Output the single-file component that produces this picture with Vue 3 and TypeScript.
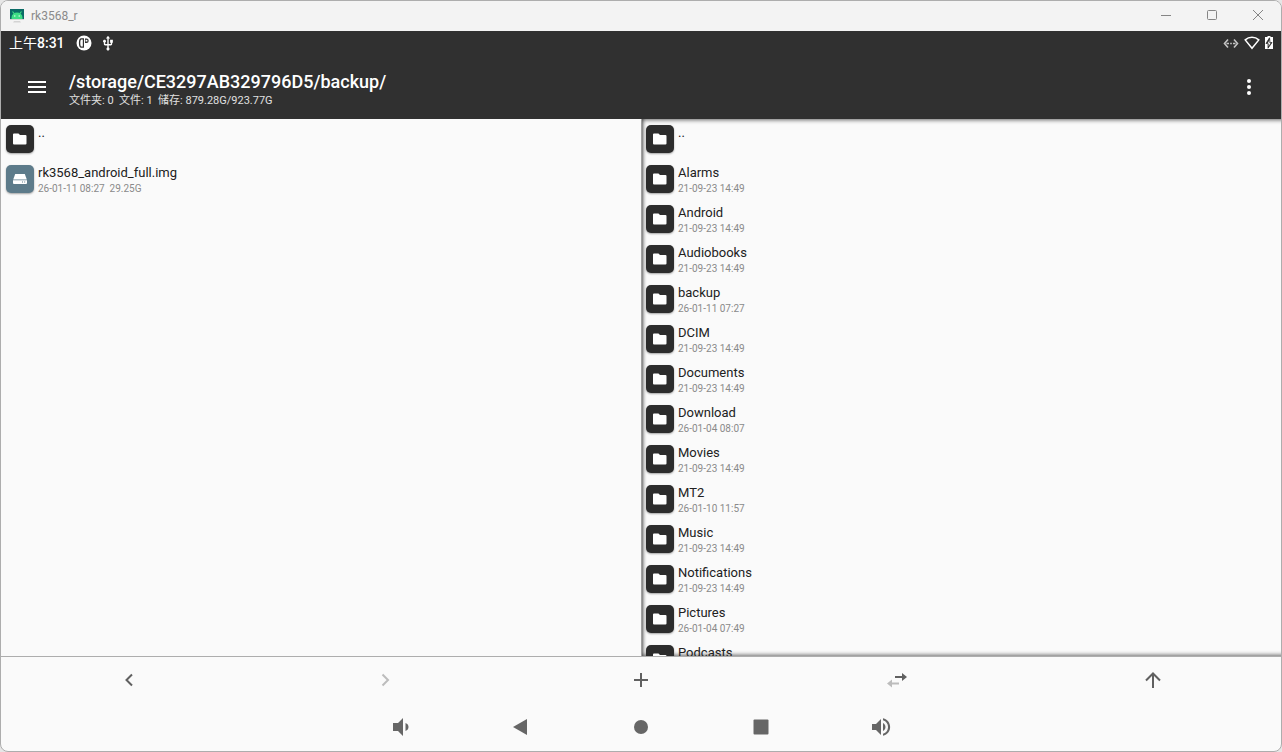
<script setup lang="ts">
interface Entry {
  name: string
  meta?: string
  kind?: 'folder' | 'disk'
}

const left: Entry[] = [
  { name: '..' },
  { name: 'rk3568_android_full.img', meta: '26-01-11 08:27\u00a0 29.25G', kind: 'disk' },
]

const right: Entry[] = [
  { name: '..' },
  { name: 'Alarms', meta: '21-09-23 14:49' },
  { name: 'Android', meta: '21-09-23 14:49' },
  { name: 'Audiobooks', meta: '21-09-23 14:49' },
  { name: 'backup', meta: '26-01-11 07:27' },
  { name: 'DCIM', meta: '21-09-23 14:49' },
  { name: 'Documents', meta: '21-09-23 14:49' },
  { name: 'Download', meta: '26-01-04 08:07' },
  { name: 'Movies', meta: '21-09-23 14:49' },
  { name: 'MT2', meta: '26-01-10 11:57' },
  { name: 'Music', meta: '21-09-23 14:49' },
  { name: 'Notifications', meta: '21-09-23 14:49' },
  { name: 'Pictures', meta: '26-01-04 07:49' },
  { name: 'Podcasts' },
]

const panes = [
  { id: 'left', entries: left },
  { id: 'right', entries: right },
]
</script>

<template>
  <div class="window">
    <div class="titlebar">
      <svg class="app-icon" viewBox="0 0 14 14" aria-hidden="true">
        <rect x="0" y="0" width="14" height="11" fill="#0a6b66" />
        <path d="M1.500 10V8.500a5.500 5 0 0 1 11 0V10z" fill="#3ddc84" />
        <path d="M2.500 2.500l2 2.500M11.500 2.500L9.500 5" stroke="#3ddc84" stroke-width="1.200" />
        <circle cx="4.800" cy="7" r=".7" fill="#eafff3" /><circle cx="9.200" cy="7" r=".7" fill="#eafff3" />
        <path d="M0 10h14v1H0zM4 12h6l1 1.500H3z" fill="#d3d3d3" />
      </svg>
      <span class="app-name">rk3568_r</span>
      <div class="controls">
        <button type="button" aria-label="Minimize"><svg viewBox="0 0 12 12"><path d="M1 5.500h10" /></svg></button>
        <button type="button" aria-label="Maximize"><svg viewBox="0 0 12 12"><rect x="1.500" y=".5" width="9" height="9" rx="1" /></svg></button>
        <button type="button" aria-label="Close"><svg viewBox="0 0 12 12"><path d="M1 0l10 10M11 0L1 10" /></svg></button>
      </div>
    </div>

    <div class="status">
      <span class="clock"><span class="period">上午</span>8:31</span>
      <svg class="s16" viewBox="0 0 16 16" aria-hidden="true">
        <circle cx="8" cy="8" r="7.500" fill="#fff" />
        <path d="M5.200 3.200H8v9.600H5.200C3.600 12.800 2.900 11 2.900 8s.7-4.800 2.300-4.800z" fill="#303030" />
        <path d="M5.400 4.500h1.400v7H5.400C4.600 11.500 4.300 10 4.300 8s.3-3.500 1.100-3.500z" fill="#fff" />
        <path d="M9 3.500h1.500a2.200 2.200 0 0 1 0 4.400H9z" fill="#303030" />
        <rect x="9.600" y="4.800" width="1.800" height="1.700" fill="#fff" />
      </svg>
      <svg class="s16 usb" viewBox="2 0 20 23" aria-hidden="true">
        <path fill="#fff" d="M15 7v4h1v2h-3V5h2l-3-4-3 4h2v8H8v-2.070c.700-.370 1.200-1.080 1.200-1.930 0-1.210-.990-2.200-2.200-2.200S4.800 7.790 4.800 9c0 .850.500 1.560 1.200 1.930V13c0 1.110.890 2 2 2h3v3.050c-.710.370-1.200 1.100-1.200 1.950 0 1.220.990 2.200 2.200 2.200s2.200-.980 2.200-2.200c0-.850-.490-1.580-1.200-1.950V15h3c1.110 0 2-.890 2-2v-2h1V7h-4z" />
      </svg>
      <div class="indicators">
        <svg class="ethernet" viewBox="0 0 16 16" aria-hidden="true">
          <path d="M5 4.500L1.500 8.500l3.500 4M11 4.500l3.500 4-3.500 4" fill="none" stroke="#c4c4c4" stroke-width="1.600" />
          <path d="M3.500 8.500h2.500M7.200 8.500h1.600M10 8.500h2.500" stroke="#c4c4c4" stroke-width="1.500" />
        </svg>
        <svg class="wifi" viewBox="0 0 16 16" aria-hidden="true">
          <path d="M1.200 4.900C5 1.400 11 1.400 14.800 4.900L8 13.200z" fill="none" stroke="#fff" stroke-width="1.500" />
        </svg>
        <svg class="battery" viewBox="0 0 8 14" aria-hidden="true">
          <path d="M2.500 0h3v1H8v12H0V1h2.500z" fill="#fff" />
          <path d="M4.500 1.800L1 7.500h2L3 12.200 7 6.500H5z" fill="#303030" stroke="#303030" stroke-width=".8" />
          <path d="M4.600 4L2.600 7.400h1.200L3.500 10.200l2.200-3.500H4.300z" fill="#fff" />
        </svg>
      </div>
    </div>

    <header class="appbar">
      <button type="button" class="menu" aria-label="Menu">
        <svg viewBox="0 0 24 24"><path fill="#fff" d="M3 18h18v-2H3v2zm0-5h18v-2H3v2zm0-7v2h18V6H3z" /></svg>
      </button>
      <div class="heading">
        <h1>/storage/CE3297AB329796D5/backup/</h1>
        <p>文件夹: 0&nbsp; 文件: 1&nbsp; 储存: 879.28G/923.77G</p>
      </div>
      <button type="button" class="more" aria-label="More options">
        <svg viewBox="0 0 24 24"><g fill="#fff"><circle cx="12" cy="6" r="2" /><circle cx="12" cy="12" r="2" /><circle cx="12" cy="18" r="2" /></g></svg>
      </button>
    </header>

    <main class="panes">
      <ul v-for="pane in panes" :key="pane.id" class="pane" :class="pane.id">
        <li v-for="entry in pane.entries" :key="entry.name" class="row">
          <span class="tile" :class="{ disk: entry.kind === 'disk' }">
            <svg v-if="entry.kind === 'disk'" viewBox="0 0 16 16" aria-hidden="true">
              <path d="M3.200 3h9.600l2 5.500H1.200z" fill="#fff" />
              <path d="M1 9.300h14V12a1 1 0 0 1-1 1H2a1 1 0 0 1-1-1z" fill="#fff" />
              <path d="M10 11h1M12.200 11h1" stroke="#5d7b8a" stroke-width="1" />
            </svg>
            <svg v-else viewBox="0 0 16 16" aria-hidden="true">
              <path d="M2 2.500h4.500L8 4h5.500a1 1 0 0 1 1 1v7.500a1 1 0 0 1-1 1H2a1 1 0 0 1-1-1v-9a1 1 0 0 1 1-1z" fill="#fff" />
            </svg>
          </span>
          <span class="text">
            <span class="name">{{ entry.name }}</span>
            <span v-if="entry.meta" class="meta">{{ entry.meta }}</span>
          </span>
        </li>
      </ul>
    </main>

    <div class="toolbar">
      <button type="button" aria-label="Back"><svg viewBox="0 0 20 20"><path d="M13 4.500L7.500 10l5.500 5.500" /></svg></button>
      <button type="button" aria-label="Forward" disabled><svg viewBox="0 0 20 20"><path d="M7.500 4.500L13 10l-5.500 5.500" /></svg></button>
      <button type="button" aria-label="New"><svg viewBox="0 0 20 20"><path d="M10 3v14M3 10h14" /></svg></button>
      <button type="button" aria-label="Sync panes">
        <svg viewBox="0 0 20 20">
          <path d="M8 7h8" /><path class="solid" d="M15 3l5 4-5 4z" />
          <g class="faint"><path d="M4 13.500h8" /><path class="solid" d="M5 9.500L0 13.500l5 4z" /></g>
        </svg>
      </button>
      <button type="button" aria-label="Up"><svg viewBox="0 0 20 20"><path d="M10 18V4M3 10.500l7-7 7 7" /></svg></button>
    </div>

    <nav class="navbar" aria-label="System">
      <button type="button" aria-label="Volume down"><svg viewBox="0 0 20 20"><path d="M2 6h5l5-5v18l-5-5H2zM14.500 6c4 1.200 4 6.800 0 8z" /></svg></button>
      <button type="button" aria-label="Back"><svg viewBox="0 0 20 20"><path d="M2 10L16 2v16z" /></svg></button>
      <button type="button" aria-label="Home"><svg viewBox="0 0 20 20"><circle cx="10" cy="10" r="7" /></svg></button>
      <button type="button" aria-label="Recents"><svg viewBox="0 0 20 20"><rect x="2.500" y="2.500" width="15" height="15" rx="1" /></svg></button>
      <button type="button" aria-label="Volume up"><svg viewBox="0 0 20 20"><path d="M1 7h4l5-5v16l-5-5H1zM12 6c3.300 1.500 3.300 6.500 0 8zM12 1.200c9.500 2 9.500 15.600 0 17.600v-2c6.700-1.800 6.700-11.800 0-13.600z" /></svg></button>
    </nav>
  </div>
</template>

<style>
html,
body {
  background: #e6e6e6;
}
</style>

<style scoped>
* {
  box-sizing: border-box;
}

.window {
  height: 100vh;
  display: flex;
  flex-direction: column;
  border: 1px solid #adadad;
  border-radius: 8px;
  overflow: hidden;
  background: #fafafa;
  font-family: Roboto, "Noto Sans CJK SC", sans-serif;
}

button {
  display: flex;
  align-items: center;
  justify-content: center;
  margin: 0;
  padding: 0;
  border: 0;
  background: none;
}

svg {
  display: block;
  flex: none;
}

.titlebar {
  flex: none;
  height: 30px;
  display: flex;
  align-items: center;
  padding-left: 9px;
  background: #f3f3f3;
}

.app-icon {
  width: 14px;
  height: 14px;
}

.app-name {
  margin-left: 7px;
  font-size: 12px;
  color: #8a8a8a;
}

.controls {
  display: flex;
  align-self: stretch;
  margin-left: auto;
}

.controls button {
  width: 46px;
}

.controls svg {
  width: 12px;
  height: 12px;
  fill: none;
  stroke: #858585;
  stroke-width: 1;
}

.status {
  flex: none;
  height: 24px;
  display: flex;
  align-items: center;
  padding: 0 8px;
  background: #303030;
  color: #fff;
}

.clock {
  margin-right: 11px;
  font-size: 14px;
  font-weight: 500;
  line-height: 24px;
}

.period {
  font-weight: 400;
}

.s16 {
  width: 16px;
  height: 16px;
}

.usb {
  margin-left: 8px;
}

.indicators {
  display: flex;
  align-items: center;
  gap: 5px;
  margin-left: auto;
}

.ethernet,
.wifi {
  width: 16px;
  height: 16px;
}

.battery {
  width: 8px;
  height: 14px;
}

.appbar {
  flex: none;
  height: 64px;
  display: flex;
  align-items: center;
  padding: 0 20px 0 24px;
  background: #303030;
  color: #fff;
}

.appbar svg {
  width: 24px;
  height: 24px;
}

.heading {
  flex: 1;
  margin-left: 20px;
  padding-top: 5px;
}

h1 {
  margin: 0;
  font-size: 18px;
  font-weight: 500;
  line-height: 22px;
}

p {
  margin: 0;
  font-size: 11px;
  line-height: 16px;
  color: #e0e0e0;
}

.panes {
  flex: 1;
  min-height: 0;
  display: grid;
  grid-template-columns: 1fr 1fr;
}

.pane {
  margin: 0;
  padding: 0;
  list-style: none;
  min-height: 0;
  overflow: hidden;
}

.right {
  box-shadow:
    inset 1px 0 #a0a0a0,
    inset 4px 4px 4px -3px rgba(0, 0, 0, 0.6),
    inset 4px -4px 4px -3px rgba(0, 0, 0, 0.6);
}

.row {
  height: 40px;
  display: flex;
  align-items: center;
  padding-left: 5px;
}

.tile {
  width: 28px;
  height: 28px;
  display: flex;
  align-items: center;
  justify-content: center;
  border-radius: 5px;
  background: #2c2c2c;
  box-shadow: 0 1px 2px rgba(0, 0, 0, 0.35);
}

.tile.disk {
  background: #5d7b8a;
}

.tile svg {
  width: 16px;
  height: 16px;
}

.text {
  align-self: flex-start;
  display: flex;
  flex-direction: column;
  margin-left: 4px;
  padding-top: 6px;
}

.name {
  font-size: 13px;
  line-height: 16px;
  color: #212121;
}

.meta {
  font-size: 10px;
  line-height: 16px;
  color: #8a8a8a;
}

.toolbar {
  flex: none;
  height: 48px;
  display: grid;
  grid-template-columns: repeat(5, 1fr);
  padding-bottom: 1px;
  border-top: 1px solid #adadad;
}

.toolbar svg {
  width: 20px;
  height: 20px;
  fill: none;
  stroke: #606060;
  stroke-width: 2;
}

.toolbar .solid {
  fill: #606060;
  stroke: none;
}

.toolbar button:disabled svg,
.toolbar .faint {
  stroke: #bcbcbc;
}

.toolbar .faint .solid {
  fill: #bcbcbc;
}

.navbar {
  flex: none;
  height: 47px;
  display: flex;
  justify-content: center;
  padding-bottom: 1px;
}

.navbar button {
  width: 120px;
}

.navbar svg {
  width: 20px;
  height: 20px;
  fill: #666;
}
</style>
